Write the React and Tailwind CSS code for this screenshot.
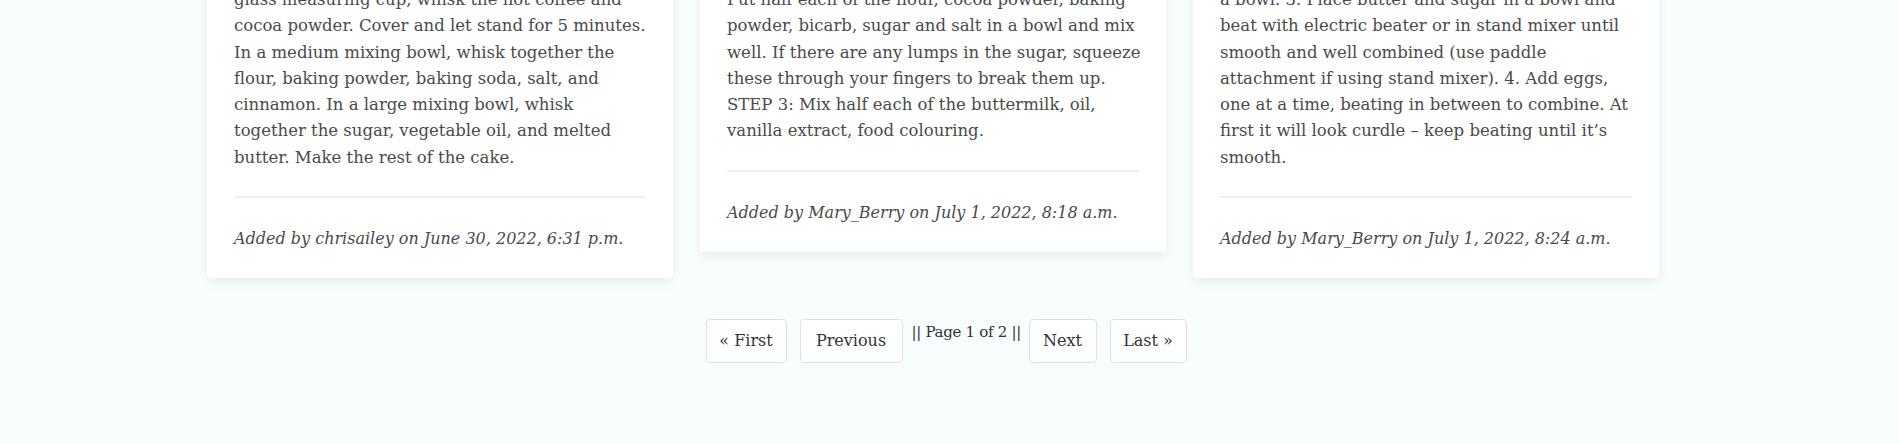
import React from "react";

const recipes = [
  {
    lines: [
      "glass measuring cup, whisk the hot coffee and",
      "cocoa powder. Cover and let stand for 5 minutes.",
      "In a medium mixing bowl, whisk together the",
      "flour, baking powder, baking soda, salt, and",
      "cinnamon. In a large mixing bowl, whisk",
      "together the sugar, vegetable oil, and melted",
      "butter. Make the rest of the cake.",
    ],
    author: "chrisailey",
    date: "June 30, 2022, 6:31 p.m.",
  },
  {
    lines: [
      "Put half each of the flour, cocoa powder, baking",
      "powder, bicarb, sugar and salt in a bowl and mix",
      "well. If there are any lumps in the sugar, squeeze",
      "these through your fingers to break them up.",
      "STEP 3: Mix half each of the buttermilk, oil,",
      "vanilla extract, food colouring.",
    ],
    author: "Mary_Berry",
    date: "July 1, 2022, 8:18 a.m.",
  },
  {
    lines: [
      "a bowl. 3. Place butter and sugar in a bowl and",
      "beat with electric beater or in stand mixer until",
      "smooth and well combined (use paddle",
      "attachment if using stand mixer). 4. Add eggs,",
      "one at a time, beating in between to combine. At",
      "first it will look curdle \u2013 keep beating until it\u2019s",
      "smooth.",
    ],
    author: "Mary_Berry",
    date: "July 1, 2022, 8:24 a.m.",
  },
];

const RecipeCard = ({ recipe }) => (
  <div className="w-[466px] shrink-0 bg-white rounded-[4px] shadow-[0_4px_12px_rgba(0,0,0,0.07)] px-[27px] pt-[27px] pb-[26px]">
    {/* METHOD */}
    <p className="text-[16.5px] leading-[26.3px] text-[#4a4a4a] whitespace-nowrap">
      {recipe.lines.map((line, i) => (
        <span key={i} className="block">
          {line}
        </span>
      ))}
    </p>

    <hr className="mt-[25px] border-0 border-t-2 border-[#f0f0f0]" />

    {/* FOOTER */}
    <p className="mt-[28px] text-[16px] leading-[26px] italic text-[#4a4a4a] whitespace-nowrap">
      Added by {recipe.author} on {recipe.date}
    </p>
  </div>
);

const PageButton = ({ children, className }) => (
  <button
    className={`h-[44px] bg-white border border-[#dee2e6] rounded-[4px] text-[16px] text-[#333] flex items-center justify-center whitespace-nowrap ${className}`}
  >
    {children}
  </button>
);

export default function App() {
  return (
    <div
      className="min-h-[444px] bg-[#f8fdfd] overflow-hidden"
      style={{ fontFamily: '"DejaVu Serif", "Liberation Serif", serif' }}
    >
      {/* CARDS */}
      <div className="flex items-start gap-[27px] pl-[207px] -mt-[40px]">
        {recipes.map((r, i) => (
          <RecipeCard key={i} recipe={r} />
        ))}
      </div>

      {/* PAGINATION */}
      <div className="flex justify-center items-start mt-[41px] pr-[7px]">
        <PageButton className="w-[81px] mr-[13px]">« First</PageButton>
        <PageButton className="w-[103px] mr-[9px]">Previous</PageButton>
        <span className="text-[15px] leading-[26px] text-[#333] mr-[9px] w-[108px] text-center whitespace-nowrap tracking-[-0.3px]">
          || Page 1 of 2 ||
        </span>
        <PageButton className="w-[68px] mr-[13px]">Next</PageButton>
        <PageButton className="w-[77px]">Last »</PageButton>
      </div>
    </div>
  );
}
